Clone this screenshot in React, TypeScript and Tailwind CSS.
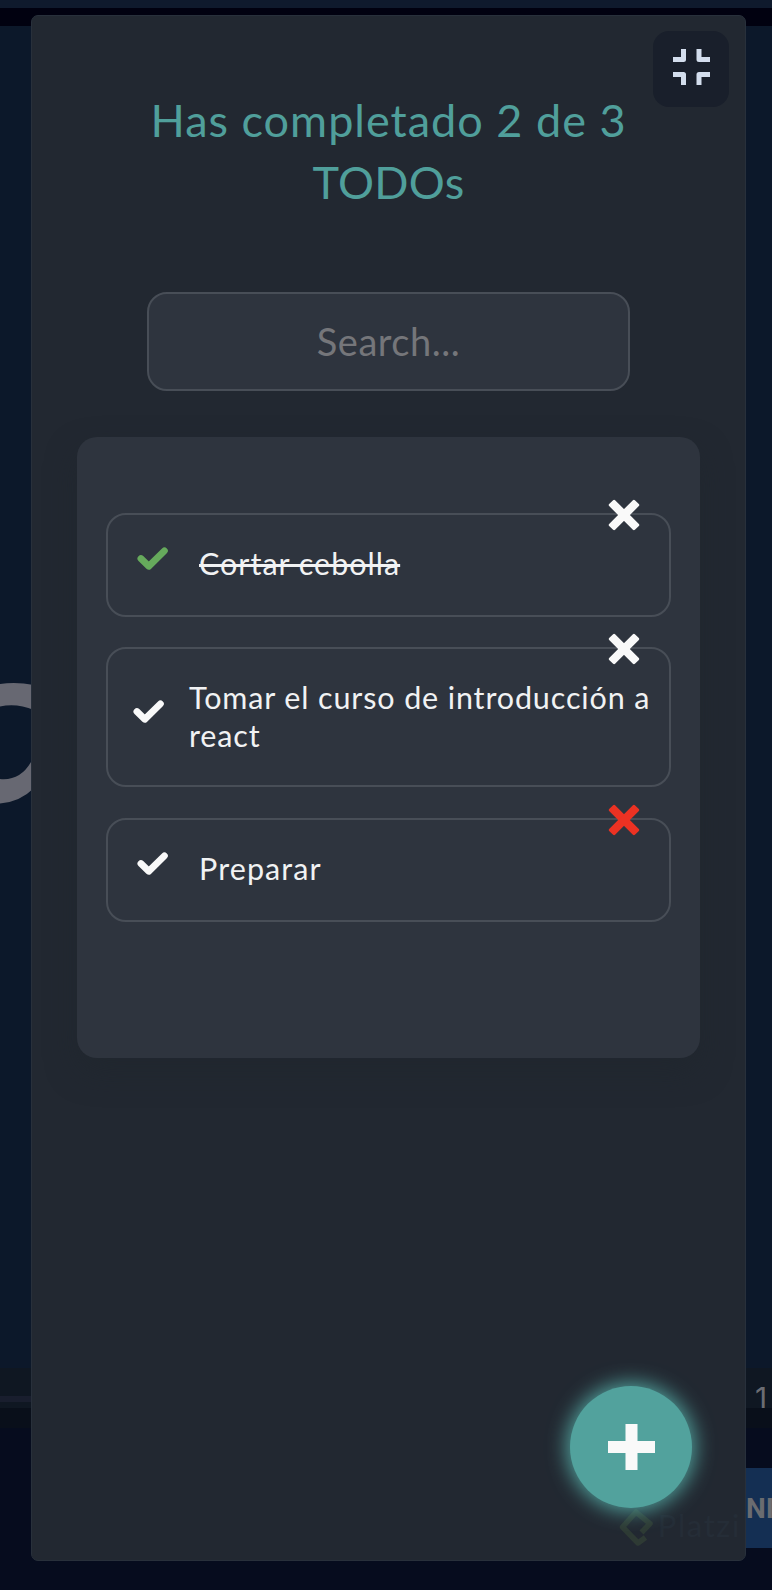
import React from 'react';

function Check({ className }: { className: string }) {
  return (
    <svg viewBox="0 0 31 24" className={`h-6 w-[31px] shrink-0 ${className}`} fill="none" stroke="currentColor" strokeWidth="6.8" strokeLinecap="round" strokeLinejoin="round">
      <path d="M3.900 11.500 11.800 19.200 27.400 3.900" />
    </svg>
  );
}

function Cross({ className }: { className: string }) {
  return (
    <svg viewBox="0 0 32 32" className={`absolute -top-[16px] right-[29px] size-8 ${className}`} fill="currentColor">
      <g transform="rotate(45 16 16)">
        <rect x="-2.2" y="11.8" width="36.4" height="8.4" rx="1.4" />
        <rect x="11.8" y="-2.2" width="8.4" height="36.4" rx="1.4" />
      </g>
    </svg>
  );
}

const itemBase = 'relative flex w-[565px] rounded-[20px] border-2 border-[#484e57] text-[30.5px] leading-[38px] text-[#f1f2f3]';

function Backdrop() {
  return (
    <div className="flex h-full w-full flex-col bg-[#060c1e]">
      <div className="h-2 bg-[#0f1a2d]" />
      <div className="h-[18px] bg-[#010110]" />
      <div className="h-[1342px] bg-[#0c182a] pt-[654px]">
        <svg viewBox="0 680 34 126" className="h-[126px] w-[34px]" fill="#676872">
          <path d="M0 684Q16 681.500 34 685V710Q17 703 0 706.500ZM0 779Q20 781 31 762L34 752V788Q20 802 0 803.500Z" />
        </svg>
      </div>
      <div className="flex h-10 justify-between bg-[#0f1722]">
        <div className="mt-7 h-1.5 w-10 bg-[#191e2e]" />
        <div className="w-[17px] pt-[10px] font-['Inter'] text-[30px] leading-[40px] text-[#6b6d73]">1</div>
      </div>
      <div className="h-5 bg-[#090f1a]" />
      <div className="mt-10 flex h-20 w-[60px] items-center self-end bg-[#142f53] pl-[34px] pt-0.5 font-['Roboto'] text-[28px] font-bold text-[#6a6c70]">NI</div>
    </div>
  );
}

export default function App() {
  return (
    <div className="relative h-[1590px] w-full overflow-hidden font-['Lato',sans-serif]">
      <Backdrop />
      <main className="absolute left-[31px] top-[15px] flex h-[1546px] w-[715px] flex-col items-center rounded-[7px] border border-[#28303b] bg-[#222831]">
        <button className="absolute right-[16px] top-[15px] flex size-[76px] items-center justify-center rounded-2xl bg-[#191f2b] pb-1">
          <svg viewBox="0 0 37 36" className="h-9 w-[37px]" fill="none" stroke="#d3dded" strokeWidth="5" strokeLinejoin="round">
            <path d="M0 10.500H10.500V0M26 0V10.500H37M0 25.500H10.500V36M26 36V25.500H37" />
          </svg>
        </button>
        <h1 className="mt-[73px] text-center text-[45px] leading-[62px] tracking-[1px] text-[#509f9b]">
          Has completado 2 de 3<br /><span className="tracking-[0.3px]">TODOs</span>
        </h1>
        <input placeholder="Search..." className="mt-[79px] h-[99px] w-[483px] rounded-[20px] border-2 border-[#484e57] bg-[#2e343e] pb-[2px] text-center text-[38px] tracking-[0.5px] outline-none placeholder:text-[#75767a]" />
        <ul className="mt-[46px] flex h-[621px] w-[623px] flex-col items-center rounded-[20px] bg-[#2e343e] pt-[76px] shadow-[0_14px_30px_rgba(32,39,45,0.6)]">
          <li className={`${itemBase} h-[104px]`}>
            <Check className="ml-[29px] mt-[32px] text-[#66aa5c]" />
            <span className="ml-[31px] mt-[29px] h-[38px] whitespace-nowrap tracking-[1px] line-through decoration-[3px]">Cortar cebolla</span>
            <Cross className="text-[#f9f9f9]" />
          </li>
          <li className={`${itemBase} mt-[30px] h-[140px]`}>
            <Check className="ml-[25px] mt-[51px] text-[#f9f9f9]" />
            <span className="ml-[25px] mt-[29px] whitespace-nowrap tracking-[0.87px]">Tomar el curso de introducción a<br />react</span>
            <Cross className="text-[#f9f9f9]" />
          </li>
          <li className={`${itemBase} mt-[31px] h-[104px]`}>
            <Check className="ml-[29px] mt-[32px] text-[#f9f9f9]" />
            <span className="ml-[31px] mt-[29px] h-[38px] whitespace-nowrap tracking-[1.1px]">Preparar</span>
            <Cross className="text-[#eb3223]" />
          </li>
        </ul>
        <div className="absolute bottom-[14px] right-[4px] flex items-center">
          <svg viewBox="0 0 35 38" className="h-[38px] w-[35px]" fill="none" stroke="#2e3a34" strokeWidth="5.5" strokeLinejoin="round">
            <path d="M26.500 29.500 19 35 3.500 19 17 4 31 15.500 22.500 24.500" />
          </svg>
          <span className="ml-1 -mt-1 text-[31px] leading-[38px] tracking-[1.6px] text-[#252d37]">Platzi</span>
        </div>
        <button className="absolute bottom-[52px] right-[53px] flex size-[122px] items-center justify-center rounded-full bg-[#52a29d] shadow-[0_0_20px_3px_#52a29d]">
          <svg viewBox="0 0 47 46" className="h-[46px] w-[47px]" stroke="#f9f9f9" strokeWidth="12">
            <path d="M23.500 0V46M0 23H47" />
          </svg>
        </button>
      </main>
    </div>
  );
}
